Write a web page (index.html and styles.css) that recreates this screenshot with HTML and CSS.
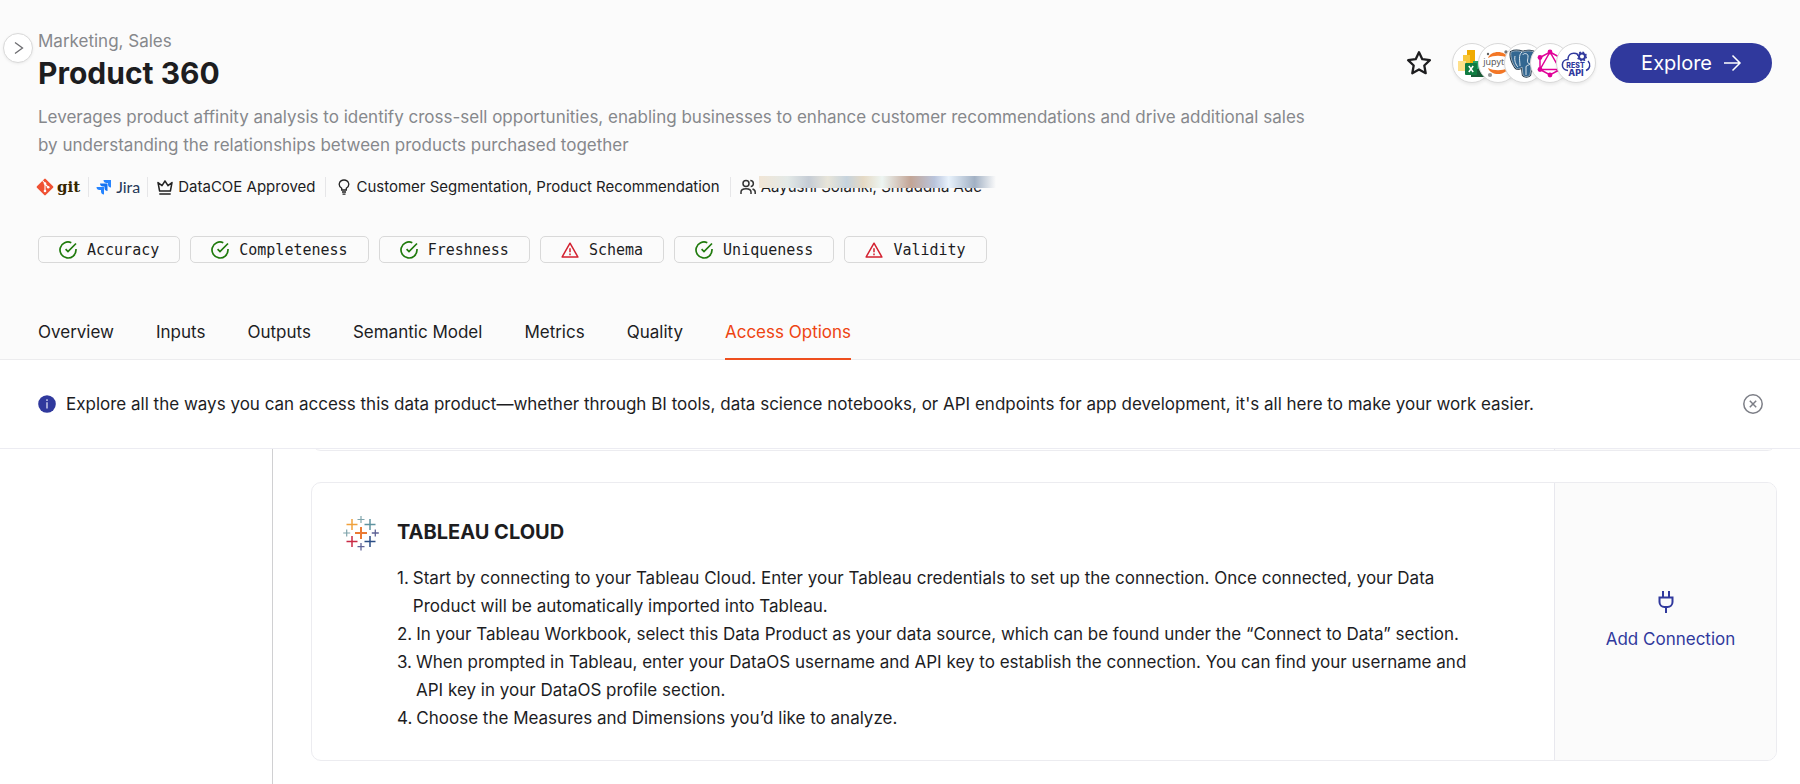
FILE: index.html
```html
<!DOCTYPE html>
<html lang="en">
<head>
<meta charset="utf-8">
<title>Product 360</title>
<link rel="stylesheet" href="styles.css">
</head>
<body>
<svg class="defs" aria-hidden="true">
  <symbol id="check" viewBox="0 0 18 18"><path d="M17 8.1V9a8 8 0 1 1-4.7-7.3M17 2.5 9 10.5 6.6 8.1" fill="none" stroke="#1f7a0c" stroke-width="1.7"/></symbol>
  <symbol id="warn" viewBox="0 0 18 18"><path d="M9 2.2 16.9 16H1.1z" fill="none" stroke="#d3202f" stroke-width="1.5" stroke-linejoin="round"/><path d="M9 7.2v4M9 12.6v1.6" stroke="#d3202f" stroke-width="1.5"/></symbol>
</svg>
<button class="toggle" aria-label="Expand sidebar"><svg width="12" height="14" viewBox="0 0 12 14"><path d="M3 1.5 10.500 7 3 12.500" fill="none" stroke="#6c6c70" stroke-width="1.3"/></svg></button>

<header class="header">
  <div class="top">
    <div class="intro">
      <div class="crumb">Marketing, Sales</div>
      <h1 class="title">Product 360</h1>
      <p class="desc">Leverages product affinity analysis to identify cross-sell opportunities, enabling businesses to enhance customer recommendations and drive additional sales by understanding the relationships between products purchased together</p>
    </div>
    <div class="actions">
      <button class="star" aria-label="Favourite"><svg width="26" height="26" viewBox="0 0 26 26"><path d="m13 2.2 3.3 7 7.6 1-5.6 5.3 1.4 7.7-6.7-3.7-6.7 3.7 1.4-7.7L2.1 10.2l7.6-1z" fill="none" stroke="#1d1d1f" stroke-width="2.3" stroke-linejoin="round"/></svg></button>
      <div class="tools">
        <span class="tool"><svg width="38" height="38" viewBox="0 0 38 38"><path d="M14 6h8v14h-8z" fill="#f0ab00"/><path d="M10 11h7v15h-7z" fill="#f8c83c"/><path d="M5 17h8v10H5z" fill="#ffe08a"/><path d="M20 17h14v16H20z" fill="#21a366"/><path d="M18 25h17v8H18z" fill="#185c37"/><rect x="12" y="19" width="12" height="12" rx="1" fill="#107c41"/><path d="m15.800 22 4.400 6m0-6-4.400 6" stroke="#fff" stroke-width="1.5"/></svg></span>
        <span class="tool"><svg width="38" height="38" viewBox="0 0 38 38"><path d="M9 14C12 6 26 6 29 14 23 11 15 11 9 14zM9 24c3 8 17 8 20 0-6 3-14 3-20 0z" fill="#f37726"/><circle cx="9" cy="10" r="1.2" fill="#616262"/><circle cx="27" cy="8" r="1.7" fill="#767677"/><circle cx="11" cy="31" r="2.1" fill="#989798"/><text x="19" y="21" text-anchor="middle" class="t-jup">jupyter</text></svg></span>
        <span class="tool"><svg width="38" height="38" viewBox="0 0 38 38"><path d="M6 8c4-2 9-1 12 0 4-2 10-1 13 1 1 6-2 11-5 15l-1 7c-1 2-6 2-7 0l-1-8c-2 2-5 3-7 0C7 18 5 12 6 8z" fill="#336791" stroke="#1e3344" stroke-width="2.4"/><path d="M6 8c4-2 9-1 12 0 4-2 10-1 13 1 1 6-2 11-5 15l-1 7c-1 2-6 2-7 0l-1-8c-2 2-5 3-7 0C7 18 5 12 6 8z" fill="#336791" stroke="#b7c4ce" stroke-width=".8"/><path d="M17 8c-4 3-2 9-2 14m3-11c0-2 5-2 5 1 0 4-2 7 2 8-2 2-4 1-4 3v8M10 12c-1 5 1 9 3 11" fill="none" stroke="#dbe5ec" stroke-width="1"/></svg></span>
        <span class="tool"><svg width="38" height="38" viewBox="0 0 38 38"><g fill="none" stroke="#e10098" stroke-width="1.5"><path d="m19 8 10 5.500v12L19 31 9 25.500v-12zM19 8 9 25.500h20z"/></g><g fill="#e10098"><circle cx="19" cy="8" r="2.4"/><circle cx="29" cy="13.500" r="2.4"/><circle cx="29" cy="25.500" r="2.4"/><circle cx="19" cy="31" r="2.4"/><circle cx="9" cy="25.500" r="2.4"/><circle cx="9" cy="13.500" r="2.4"/></g></svg></span>
        <span class="tool"><svg width="38" height="38" viewBox="0 0 38 38"><g fill="none" stroke="#30399d"><path d="M11 26.500c-8-1-7-11 0-11C11 9 17 8 21 10.500M31 17c3 3 2 8-2 9.500" stroke-width="1.5"/><circle cx="25" cy="12.500" r="3" stroke-width="2"/><circle cx="25" cy="12.500" r="4.3" stroke-width="1.5" stroke-dasharray="1.7 1.677"/></g><text x="18.500" y="23.500" text-anchor="middle" class="t-rest">REST</text><text x="19" y="31.500" text-anchor="middle" class="t-api">API</text></svg></span>
      </div>
      <button class="explore">Explore <svg width="20" height="20" viewBox="0 0 20 20"><path d="M2 10h15.500M10.500 2.500 18 10l-7.500 7.500" fill="none" stroke="#fff" stroke-width="1.5"/></svg></button>
    </div>
  </div>

  <div class="meta">
    <a class="meta-item git" href="#"><svg width="18" height="18" viewBox="0 0 18 18"><rect x="2.8" y="2.8" width="12.4" height="12.4" rx="1" transform="rotate(45 9 9)" fill="#f05133"/><path d="M6.500 2.500 9 5.500v8M9 6l3 3" stroke="#fff" stroke-width="1.1" fill="none"/><circle cx="9" cy="5.500" r="1.3" fill="#fff"/><circle cx="9" cy="13" r="1.3" fill="#fff"/><circle cx="12.200" cy="9.200" r="1.3" fill="#fff"/></svg><span>git</span></a>
    <a class="meta-item jira" href="#"><svg width="16" height="16" viewBox="0 0 16 16"><path d="M7.500 1H15v7.500c-1.700 0-3-1.300-3-3V4h-1.500c-1.700 0-3-1.300-3-3z" fill="#2684ff"/><path d="M4 4.500h7.500V12c-1.700 0-3-1.300-3-3V7.500H7c-1.700 0-3-1.300-3-3z" fill="#1673f0"/><path d="M.5 8H8v7.500c-1.700 0-3-1.300-3-3V11H3.500c-1.700 0-3-1.300-3-3z" fill="#2684ff"/></svg><span>Jira</span></a>
    <span class="meta-item"><svg width="16" height="16" viewBox="0 0 16 16"><path d="M1 3.500 2.600 12h10.800L15 3.500l-4 3.200L8 2 5 6.700zM2.300 15h11.400" fill="none" stroke="#222" stroke-width="1.5" stroke-linejoin="round"/></svg><span>DataCOE Approved</span></span>
    <span class="meta-item bulb"><svg width="12" height="16" viewBox="0 0 12 16"><path d="M3.700 11V9.300C-.7 6.600 1.300 1 6 1s6.700 5.600 2.300 8.300V11zM4 13h4M4.500 15.200h3" fill="none" stroke="#222" stroke-width="1.3"/></svg><span>Customer Segmentation, Product Recommendation</span></span>
    <span class="meta-item people"><svg width="16" height="16" viewBox="0 0 16 16"><g fill="none" stroke="#333" stroke-width="1.5"><circle cx="6" cy="4.500" r="3"/><path d="M1 15v-2c0-4.500 10-4.500 10 0v2M10.300 1.500c4 0 4 6 .4 6M12.500 10c2 .6 2.700 1.500 2.700 3v2"/></g></svg><span class="names">Aayushi Solanki, Shraddha Ade</span></span>
  </div>

  <div class="chips">
    <span class="chip"><svg width="18" height="18"><use href="#check"/></svg>Accuracy</span>
    <span class="chip"><svg width="18" height="18"><use href="#check"/></svg>Completeness</span>
    <span class="chip"><svg width="18" height="18"><use href="#check"/></svg>Freshness</span>
    <span class="chip"><svg width="18" height="18"><use href="#warn"/></svg>Schema</span>
    <span class="chip"><svg width="18" height="18"><use href="#check"/></svg>Uniqueness</span>
    <span class="chip"><svg width="18" height="18"><use href="#warn"/></svg>Validity</span>
  </div>

  <nav class="tabs">
    <a class="tab" href="#">Overview</a><a class="tab" href="#">Inputs</a><a class="tab" href="#">Outputs</a><a class="tab" href="#">Semantic Model</a><a class="tab" href="#">Metrics</a><a class="tab" href="#">Quality</a><a class="tab active" href="#">Access Options</a>
  </nav>
</header>

<section class="banner">
  <svg width="18" height="18" viewBox="0 0 18 18"><circle cx="9" cy="9" r="8.8" fill="#30399d"/><path d="M9 4.300v1.700M9 7.300v6.200" stroke="#dfe1f5" stroke-width="1.3"/></svg>
  <p class="banner-text">Explore all the ways you can access this data product—whether through BI tools, data science notebooks, or API endpoints for app development, it's all here to make your work easier.</p>
  <button class="close" aria-label="Dismiss"><svg width="20" height="20" viewBox="0 0 20 20"><circle cx="10" cy="10" r="9.2" fill="none" stroke="#7c7e86" stroke-width="1.5"/><path d="m6.800 6.800 6.400 6.400m0-6.400-6.400 6.400" stroke="#7c7e86" stroke-width="1.5"/></svg></button>
</section>

<main class="main">
  <aside class="side"></aside>
  <div class="cards">
    <article class="card peek"><div class="card-body"></div><div class="card-action"></div></article>
    <article class="card">
      <div class="card-body">
        <svg class="logo" width="36" height="36" viewBox="0 0 36 36"><g fill="none"><path d="M18 12v12M12 18h12" stroke="#eb7a33" stroke-width="2"/><path d="M9 4v11M3.500 9.500h11" stroke="#f0a13c" stroke-width="1.5"/><path d="M27 4v11M21.500 9.500h11" stroke="#5f93a0" stroke-width="1.5"/><path d="M9 21v11M3.500 26.500h11" stroke="#c92a45" stroke-width="1.5"/><path d="M27 21v11M21.500 26.500h11" stroke="#2b4e86" stroke-width="1.5"/><path d="M18 1v7M14.500 4.500h7M3.700 14.500v7M.2 18h7" stroke="#7fa4ab" stroke-width="1.2"/><path d="M32.300 14.500v7M28.800 18h7M18 28v7.500M14.500 31.700h7" stroke="#5f6396" stroke-width="1.3"/></g></svg>
        <div class="card-text">
          <h2 class="card-title">TABLEAU CLOUD</h2>
          <ol class="steps">
            <li><span>1.</span><span>Start by connecting to your Tableau Cloud. Enter your Tableau credentials to set up the connection. Once connected, your Data Product will be automatically imported into Tableau.</span></li>
            <li><span>2.</span><span>In your Tableau Workbook, select this Data Product as your data source, which can be found under the “Connect to Data” section.</span></li>
            <li><span>3.</span><span>When prompted in Tableau, enter your DataOS username and API key to establish the connection. You can find your username and API key in your DataOS profile section.</span></li>
            <li><span>4.</span><span>Choose the Measures and Dimensions you’d like to analyze.</span></li>
          </ol>
        </div>
      </div>
      <button class="card-action">
        <svg width="24" height="24" viewBox="0 0 24 24"><path d="M9 1v6M15 1v6M5.500 7.500h13v4.500a5 5 0 0 1-5 5h-3a5 5 0 0 1-5-5zM12 17v6" fill="none" stroke="#30399d" stroke-width="2"/></svg>
        <span class="action-label">Add Connection</span>
      </button>
    </article>
  </div>
</main>
</body>
</html>
```

FILE: styles.css
```css
* { box-sizing: border-box; }
body {
  margin: 0;
  height: 100vh;
  display: flex;
  flex-direction: column;
  overflow: hidden;
  background: #fff;
  color: #1d1d1f;
  font: 400 17px/28px Inter, "Liberation Sans", sans-serif;
}
h1, h2, p, ol { margin: 0; padding: 0; }
button { font: inherit; border: 0; background: none; padding: 0; cursor: pointer; }
a { color: inherit; text-decoration: none; }
svg { flex: none; display: block; }
.defs { position: absolute; width: 0; height: 0; }

.toggle {
  position: absolute;
  left: 3px;
  top: 33px;
  width: 30px;
  height: 30px;
  border: 1px solid #d9d9d9;
  border-radius: 50%;
  background: #fff;
  display: grid;
  place-items: center;
  box-shadow: 0 1px 3px #0001;
}

.header { background: #fbfbfb; border-bottom: 1px solid #ececee; padding: 27px 28px 0 38px; }
.top { display: flex; justify-content: space-between; align-items: flex-start; }
.crumb { color: #86888c; }
.title { font-size: 30px; line-height: 36px; font-weight: 700; }
.desc { color: #86888c; margin-top: 12px; max-width: 1280px; }

.actions { display: flex; align-items: center; gap: 14px; margin-top: 16px; }
.star { margin-right: 6px; }
.tools { display: flex; }
.tool {
  width: 40px;
  height: 40px;
  border: 1px solid #d9d9d9;
  border-radius: 50%;
  background: #fff;
  overflow: hidden;
  box-shadow: 0 2px 3px #0001;
}
.tool + .tool { margin-left: -14px; }
.t-jup { font: 9px "Open Sans", sans-serif; fill: #4e4e4e; }
.t-rest { font: 800 7px Inter, sans-serif; fill: #30399d; }
.t-api { font: 800 9px Inter, sans-serif; fill: #30399d; }
.explore {
  display: flex;
  align-items: center;
  gap: 10px;
  height: 40px;
  padding: 0 30px 0 31px;
  border-radius: 20px;
  background: #30399d;
  color: #fff;
  font-size: 20px;
}

.meta { display: flex; align-items: center; margin-top: 16px; font-size: 15px; line-height: 24px; }
.meta-item { display: flex; align-items: center; gap: 5px; padding: 0 10px; }
.meta-item + .meta-item { background: linear-gradient(#e6e6e8, #e6e6e8) left / 1px 20px no-repeat; }
.git { padding: 0 8px 0 0; gap: 3px; margin-left: -2px; font: 700 15px/24px "DejaVu Serif", serif; color: #362701; }
.jira { gap: 4px; padding: 0 7px 0 8px; font: 16px/24px Lato, sans-serif; color: #253858; }
.bulb { gap: 6px; padding-left: 13px; }
.names { position: relative; }
.names::after {
  content: "";
  position: absolute;
  left: -2px;
  right: -14px;
  top: 1px;
  height: 12px;
  background: linear-gradient(90deg, #f1e5d5, #e3e9e7 12%, #c5ccd5 21%, #e8e5d9 29%, #c6d3dd 37%, #e5d9c4 44%, #edf5f2 52%, #c3a596 64%, #b9c4dc 74%, #e8f2fc 80%, #a2b1c4 91%, #fbfbfb);
}

.chips { display: flex; flex-wrap: wrap; gap: 10px; margin-top: 37px; }
.chip {
  display: flex;
  align-items: center;
  gap: 10px;
  height: 27px;
  padding: 0 20px;
  border: 1px solid #d9d9d9;
  border-radius: 5px;
  font: 15px/24px "DejaVu Sans Mono", monospace;
}

.tabs { display: flex; gap: 42px; margin-top: 55px; }
.tab { padding-bottom: 12px; border-bottom: 2px solid transparent; margin-bottom: -1px; }
.active { color: #ee4411; border-color: #ee4f1e; }

.banner { display: flex; align-items: center; gap: 10px; padding: 30px 37px 30px 38px; border-bottom: 1px solid #ececf2; }
.banner-text { flex: 1; }

.main { flex: 1; min-height: 0; display: flex; overflow: hidden; }
.side { width: 273px; flex: none; border-right: 1px solid #d0d0d2; }
.cards { flex: 1; padding: 0 23px 0 38px; }
.card { display: flex; border: 1px solid #ececf0; border-radius: 10px; margin-bottom: 31px; overflow: hidden; }
.peek { height: 24px; margin-top: -22px; }
.card-body { flex: 1; display: flex; gap: 18px; padding: 32px 68px 28px 31px; }
.card-title { font-size: 20px; line-height: 34px; font-weight: 700; }
.steps { list-style: none; margin-top: 15px; }
.steps li { display: flex; gap: 4px; }
.card-action {
  width: 222px;
  flex: none;
  display: flex;
  flex-direction: column;
  align-items: center;
  justify-content: center;
  gap: 11px;
  border-left: 1px solid #e8e8ee;
  background: #fbfbfb;
  color: #30399d;
}
.action-label { padding-left: 10px; }
```
